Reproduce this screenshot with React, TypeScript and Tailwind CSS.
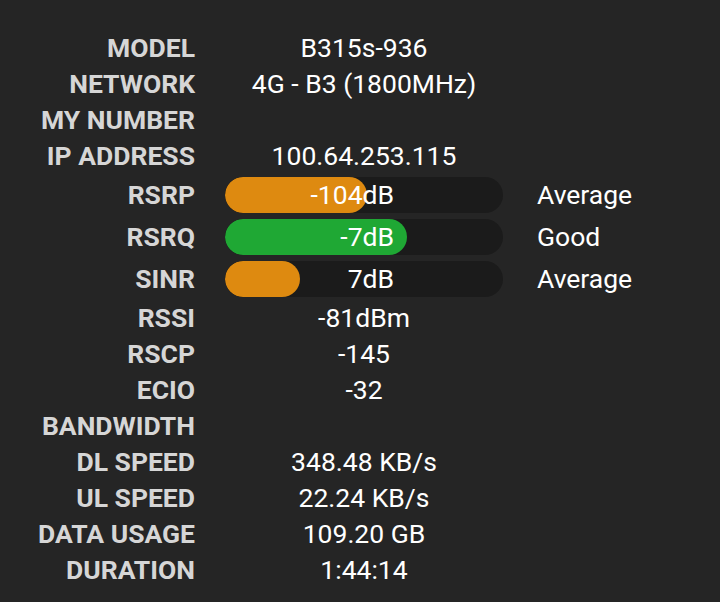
import React from "react";

type Row = {
  label: string;
  value?: string;
  bar?: { pct: number; color: string; status: string };
};

const ROWS: Row[] = [
  { label: "MODEL", value: "B315s-936" },
  { label: "NETWORK", value: "4G - B3 (1800MHz)" },
  { label: "MY NUMBER", value: "" },
  { label: "IP ADDRESS", value: "100.64.253.115" },
  { label: "RSRP", value: "-104dB", bar: { pct: 51, color: "bg-[#de8a10]", status: "Average" } },
  { label: "RSRQ", value: "-7dB", bar: { pct: 65.5, color: "bg-[#1fa834]", status: "Good" } },
  { label: "SINR", value: "7dB", bar: { pct: 27, color: "bg-[#de8a10]", status: "Average" } },
  { label: "RSSI", value: "-81dBm" },
  { label: "RSCP", value: "-145" },
  { label: "ECIO", value: "-32" },
  { label: "BANDWIDTH", value: "" },
  { label: "DL SPEED", value: "348.48 KB/s" },
  { label: "UL SPEED", value: "22.24 KB/s" },
  { label: "DATA USAGE", value: "109.20 GB" },
  { label: "DURATION", value: "1:44:14" },
];

function SignalBar({ value, pct, color }: { value: string; pct: number; color: string }) {
  return (
    <div className="relative h-[36px] w-[278px] overflow-hidden rounded-full bg-[#1b1b1b]">
      <div className={`h-full rounded-full ${color}`} style={{ width: `${pct}%` }} />
      <span className="absolute inset-0 flex items-center justify-end pr-[109px] text-white">{value}</span>
    </div>
  );
}

export default function App() {
  return (
    <main
      className="min-h-[602px] w-[720px] bg-[#252525] pt-[30px] text-[26.5px] leading-none"
      style={{ fontFamily: "Roboto, 'Noto Sans', sans-serif" }}
    >
      {ROWS.map((row) => (
        <div key={row.label} className={`flex items-center ${row.bar ? "h-[42px]" : "h-[36px]"}`}>
          <div className="w-[195px] text-right font-bold text-[#d6d6d6]">{row.label}</div>
          <div className="ml-[30px] flex w-[278px] justify-center text-white">
            {row.bar ? <SignalBar value={row.value ?? ""} pct={row.bar.pct} color={row.bar.color} /> : row.value}
          </div>
          {row.bar && <div className="ml-[34px] text-white">{row.bar.status}</div>}
        </div>
      ))}
    </main>
  );
}
